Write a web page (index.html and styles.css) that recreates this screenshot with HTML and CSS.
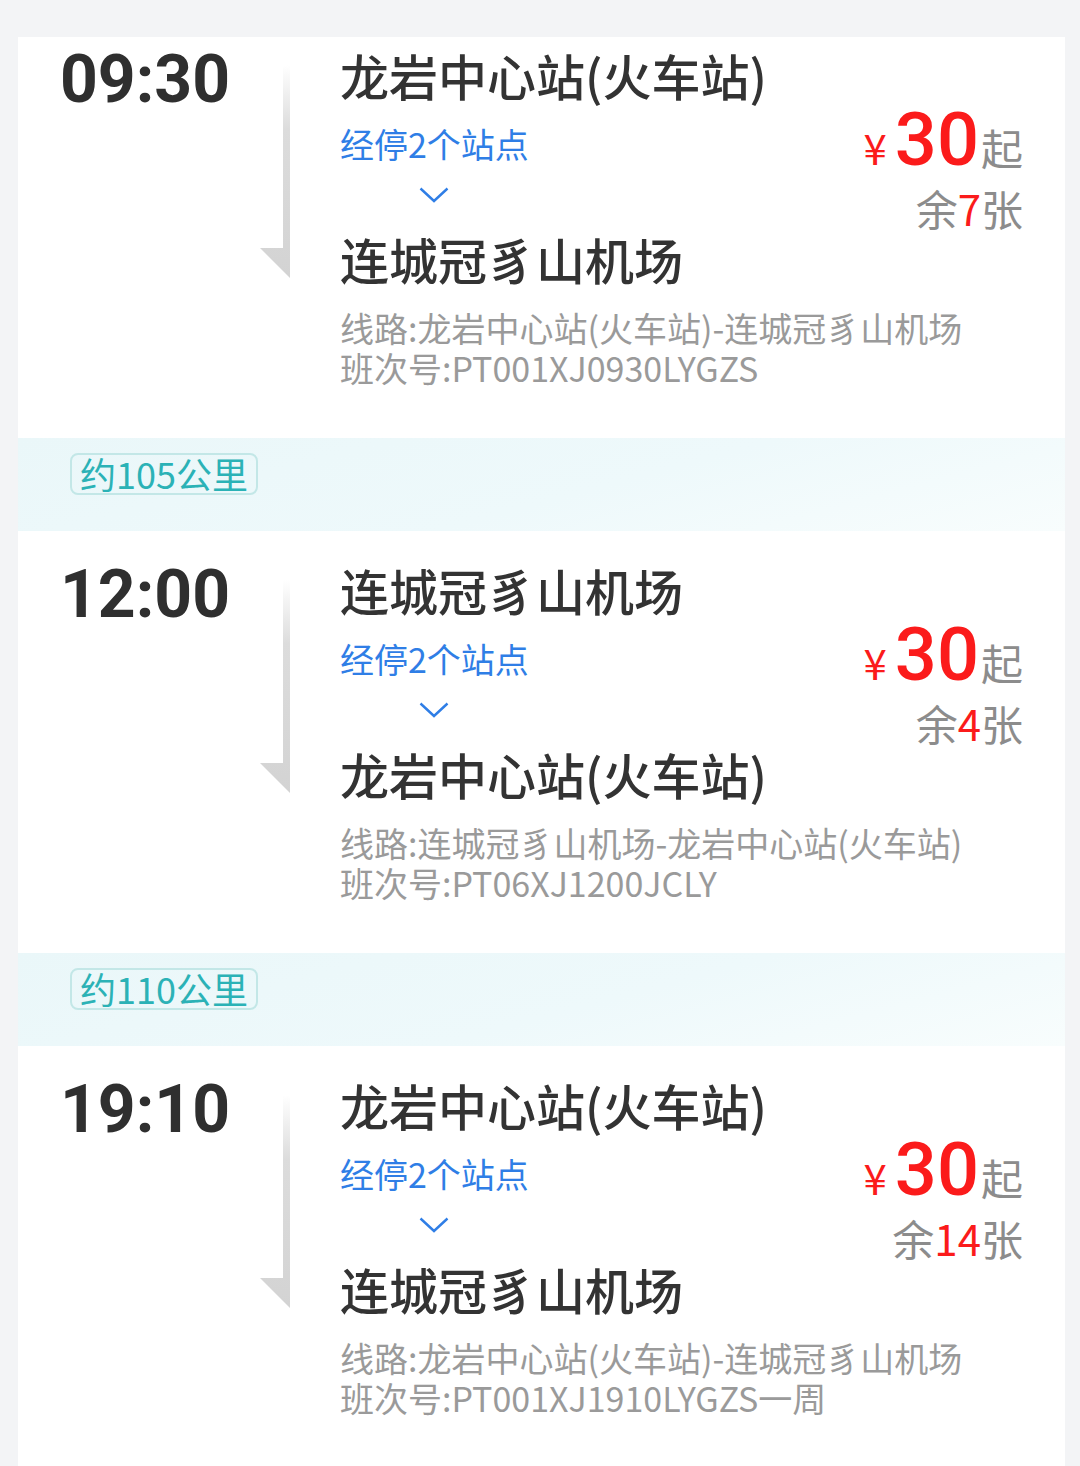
FILE: index.html
```html
<!DOCTYPE html>
<html lang="zh-CN">
<head>
  <meta charset="UTF-8">
  <meta name="viewport" content="width=device-width, initial-scale=1.0">
  <title>班次列表</title>
  <link rel="stylesheet" href="styles.css">
</head>
<body>
  <div class="page">
    <div class="card">

      <!-- 09:30 -->
      <div class="trip trip-first">
        <div class="time">09:30</div>
        <div class="track">
          <svg width="30" height="215" viewBox="0 0 30 215">
            <defs>
              <linearGradient id="fade1" x1="0" y1="0" x2="0" y2="1">
                <stop offset="0" stop-color="#ffffff"/>
                <stop offset="0.3" stop-color="#dcdcdc"/>
                <stop offset="1" stop-color="#d3d3d3"/>
              </linearGradient>
            </defs>
            <polygon points="23,0 30,0 30,213 0,183 23,183" fill="url(#fade1)"/>
          </svg>
        </div>
        <div class="info">
          <div class="station">龙岩中心站(火车站)</div>
          <div class="stops">经停2个站点</div>
          <div class="chevron">
            <svg width="30" height="16" viewBox="0 0 30 16"><polyline points="1.5,1.5 15,14 28.5,1.5" fill="none" stroke="#2f7ee6" stroke-width="2.4"/></svg>
          </div>
          <div class="station">连城冠豸山机场</div>
          <div class="meta">线路:龙岩中心站(火车站)-连城冠豸山机场<br>班次号:PT001XJ0930LYGZS</div>
        </div>
        <div class="price">
          <div class="fare"><span class="yen">¥</span><span class="num">30</span><span class="qi">起</span></div>
          <div class="seats">余<span class="red">7</span>张</div>
        </div>
      </div>

      <div class="distance"><span class="badge">约105公里</span></div>

      <!-- 12:00 -->
      <div class="trip">
        <div class="time">12:00</div>
        <div class="track">
          <svg width="30" height="215" viewBox="0 0 30 215">
            <defs>
              <linearGradient id="fade2" x1="0" y1="0" x2="0" y2="1">
                <stop offset="0" stop-color="#ffffff"/>
                <stop offset="0.3" stop-color="#dcdcdc"/>
                <stop offset="1" stop-color="#d3d3d3"/>
              </linearGradient>
            </defs>
            <polygon points="23,0 30,0 30,213 0,183 23,183" fill="url(#fade2)"/>
          </svg>
        </div>
        <div class="info">
          <div class="station">连城冠豸山机场</div>
          <div class="stops">经停2个站点</div>
          <div class="chevron">
            <svg width="30" height="16" viewBox="0 0 30 16"><polyline points="1.5,1.5 15,14 28.5,1.5" fill="none" stroke="#2f7ee6" stroke-width="2.4"/></svg>
          </div>
          <div class="station">龙岩中心站(火车站)</div>
          <div class="meta">线路:连城冠豸山机场-龙岩中心站(火车站)<br>班次号:PT06XJ1200JCLY</div>
        </div>
        <div class="price">
          <div class="fare"><span class="yen">¥</span><span class="num">30</span><span class="qi">起</span></div>
          <div class="seats">余<span class="red">4</span>张</div>
        </div>
      </div>

      <div class="distance"><span class="badge">约110公里</span></div>

      <!-- 19:10 -->
      <div class="trip">
        <div class="time">19:10</div>
        <div class="track">
          <svg width="30" height="215" viewBox="0 0 30 215">
            <defs>
              <linearGradient id="fade3" x1="0" y1="0" x2="0" y2="1">
                <stop offset="0" stop-color="#ffffff"/>
                <stop offset="0.3" stop-color="#dcdcdc"/>
                <stop offset="1" stop-color="#d3d3d3"/>
              </linearGradient>
            </defs>
            <polygon points="23,0 30,0 30,213 0,183 23,183" fill="url(#fade3)"/>
          </svg>
        </div>
        <div class="info">
          <div class="station">龙岩中心站(火车站)</div>
          <div class="stops">经停2个站点</div>
          <div class="chevron">
            <svg width="30" height="16" viewBox="0 0 30 16"><polyline points="1.5,1.5 15,14 28.5,1.5" fill="none" stroke="#2f7ee6" stroke-width="2.4"/></svg>
          </div>
          <div class="station">连城冠豸山机场</div>
          <div class="meta">线路:龙岩中心站(火车站)-连城冠豸山机场<br>班次号:PT001XJ1910LYGZS一周</div>
        </div>
        <div class="price">
          <div class="fare"><span class="yen">¥</span><span class="num">30</span><span class="qi">起</span></div>
          <div class="seats">余<span class="red">14</span>张</div>
        </div>
      </div>

    </div>
  </div>
</body>
</html>
```

FILE: styles.css
```css
body {
  margin: 0;
  background-color: #f3f4f6;
  font-family: "Noto Sans CJK SC", "Noto Sans", sans-serif;
  color: #333;
  height: 1466px;
  overflow: hidden;
}

.page {
  padding: 37px 15px 0 18px;
}

.card {
  background: #fff;
}

/* one bus trip */
.trip {
  display: flex;
  padding: 30px 42px 50px 42px;
}

.trip-first {
  padding-top: 9px;
}

.time {
  width: 200px;
  flex-shrink: 0;
  font-family: Roboto, "Liberation Sans", sans-serif;
  font-weight: 700;
  font-size: 66px;
  line-height: 68px;
  color: #2f2f2f;
}

.track {
  width: 30px;
  flex-shrink: 0;
  margin-top: 19px;
}

.track svg {
  display: block;
}

.info {
  flex: 1;
  min-width: 0;
  margin-left: 50px;
}

.station {
  font-size: 49px;
  line-height: 58px;
  font-weight: 500;
  color: #333;
  white-space: nowrap;
}

.stops {
  margin-top: 20px;
  font-size: 34px;
  line-height: 40px;
  color: #2f7ee6;
}

.chevron {
  margin: 23px 0 0 79px;
  height: 16px;
}

.chevron svg {
  display: block;
}

.chevron + .station {
  margin-top: 27px;
}

.meta {
  margin-top: 20px;
  font-size: 34px;
  line-height: 40px;
  color: #9a9a9a;
  white-space: nowrap;
}

/* price column */
.price {
  flex-shrink: 0;
  text-align: right;
  margin-top: 54px;
}

.fare {
  height: 80px;
  font-family: Roboto, "Liberation Sans", sans-serif;
  font-size: 74px;
  line-height: 80px;
  white-space: nowrap;
}

.fare .yen {
  font-family: "Noto Sans CJK SC", sans-serif;
  font-size: 42px;
  color: #fb1b1b;
  margin-right: 8px;
}

.fare .num {
  font-weight: 500;
  color: #fb1b1b;
}

.fare .qi {
  font-family: "Noto Sans CJK SC", sans-serif;
  font-size: 42px;
  color: #8c8c8c;
  margin-left: 2px;
}

.seats {
  margin-top: 3px;
  font-size: 42px;
  line-height: 50px;
  color: #8c8c8c;
  white-space: nowrap;
}

.seats .red {
  color: #fb1b1b;
}

/* distance band between trips */
.distance {
  height: 93px;
  box-sizing: border-box;
  padding: 15px 0 0 52px;
  background: linear-gradient(165deg, #eaf7f9 0%, #eef9fb 55%, #f8fdfd 100%);
}

.badge {
  display: inline-block;
  height: 42px;
  box-sizing: border-box;
  padding: 0 8px;
  border: 2px solid #c3e7e7;
  border-radius: 8px;
  font-size: 36px;
  line-height: 37px;
  color: #2bb2b6;
}
```
